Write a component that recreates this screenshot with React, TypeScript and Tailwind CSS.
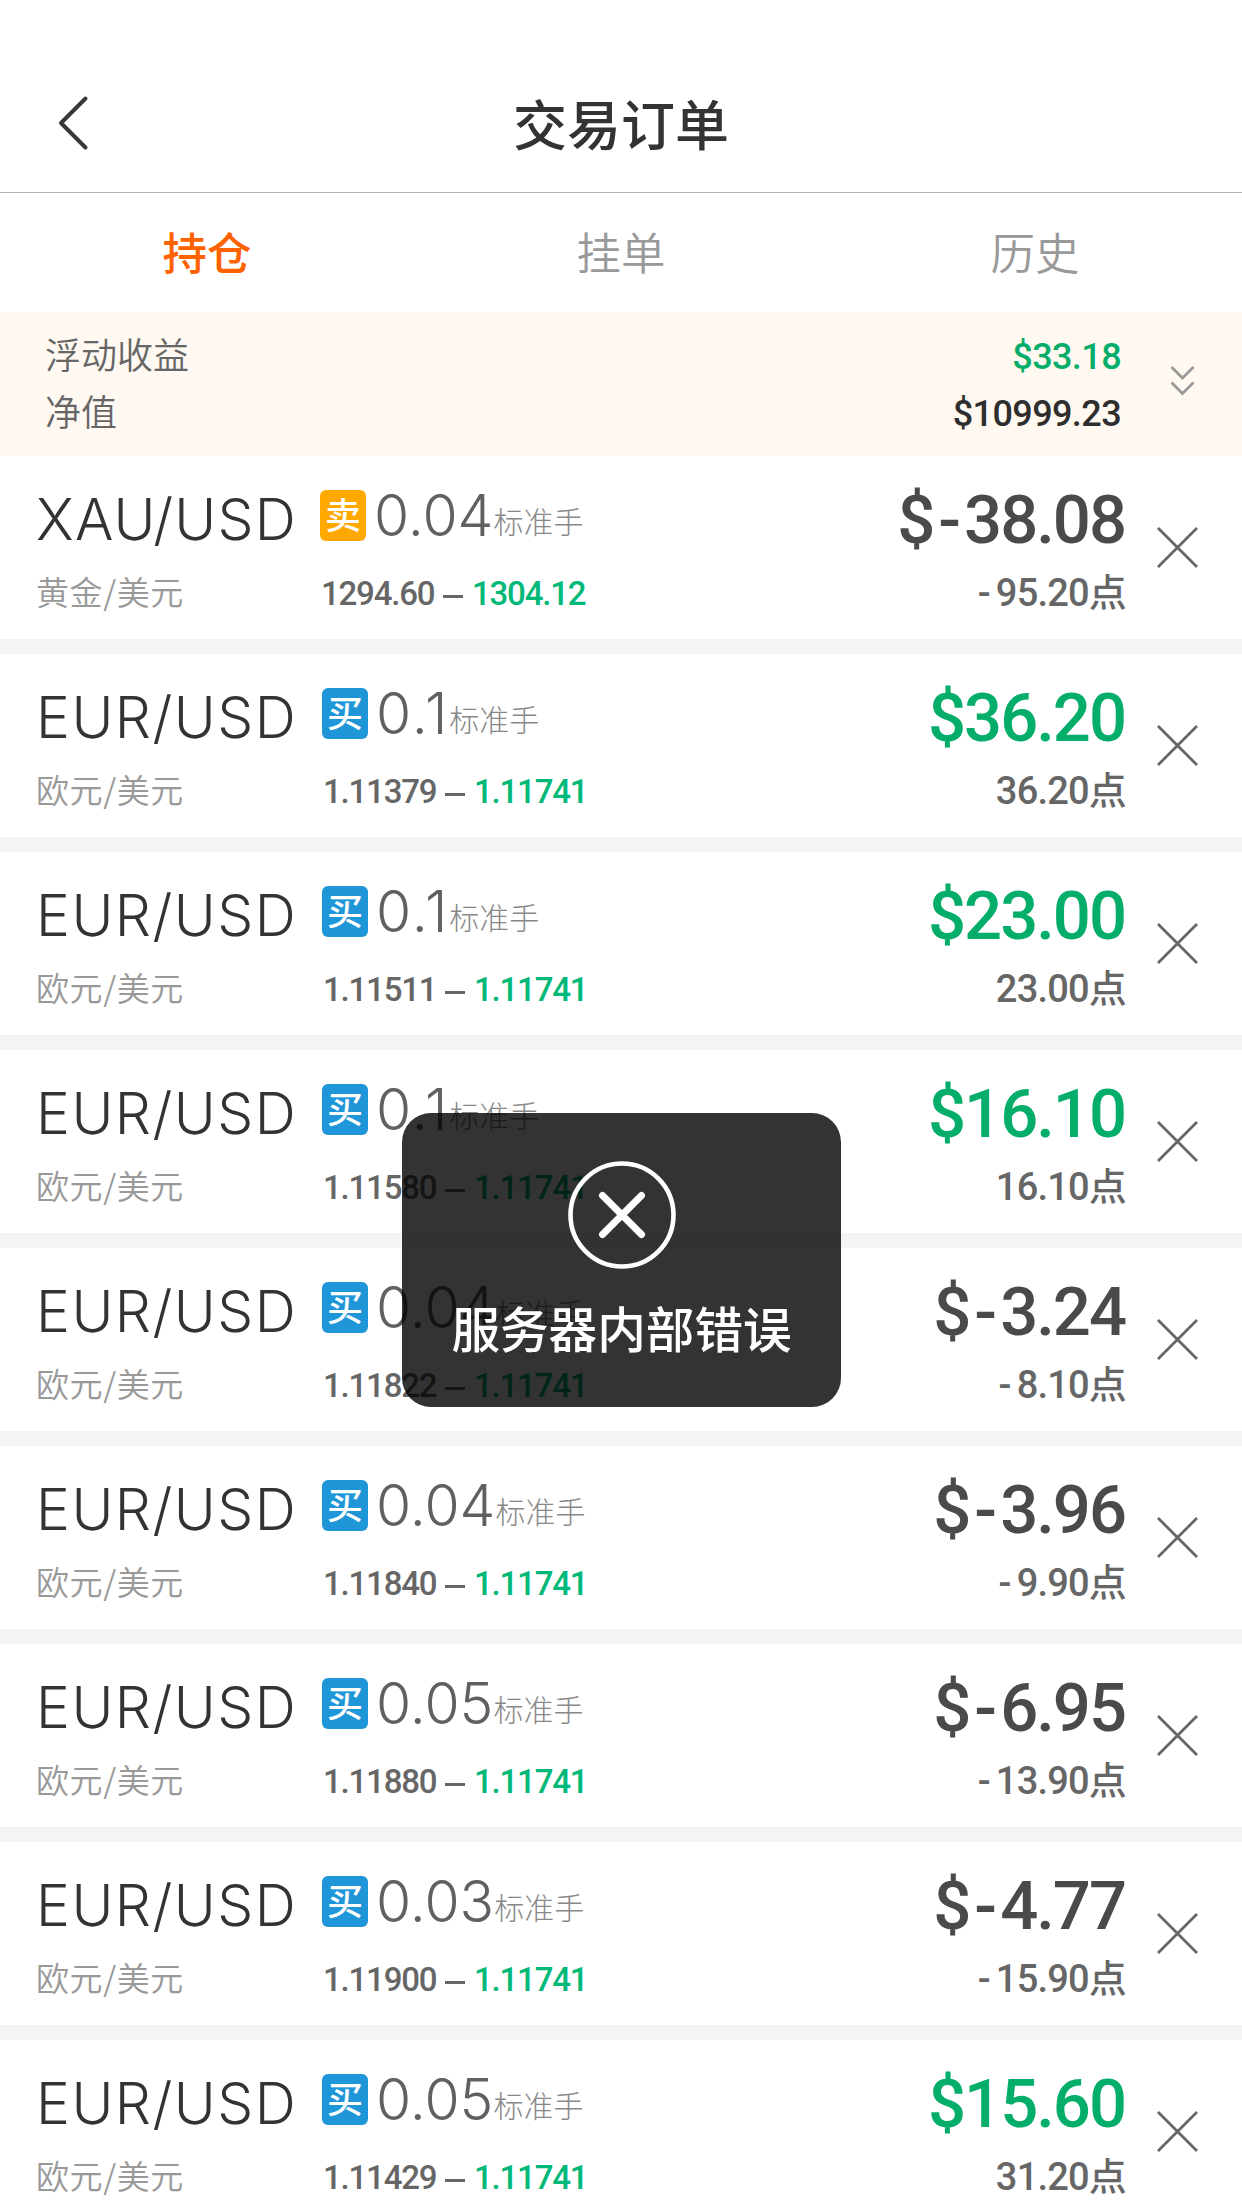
import React from 'react';

type Order = {
  pair: string;
  name: string;
  side: 'buy' | 'sell';
  lots: string;
  open: string;
  current: string;
  profit: string;
  points: string;
};

const eur = (lots: string, open: string, profit: string, points: string): Order => ({
  pair: 'EUR/USD',
  name: '欧元/美元',
  side: 'buy',
  lots,
  open,
  current: '1.11741',
  profit,
  points,
});

const orders: Order[] = [
  {
    pair: 'XAU/USD',
    name: '黄金/美元',
    side: 'sell',
    lots: '0.04',
    open: '1294.60',
    current: '1304.12',
    profit: '-38.08',
    points: '-95.20',
  },
  eur('0.1', '1.11379', '36.20', '36.20'),
  eur('0.1', '1.11511', '23.00', '23.00'),
  eur('0.1', '1.11580', '16.10', '16.10'),
  eur('0.04', '1.11822', '-3.24', '-8.10'),
  eur('0.04', '1.11840', '-3.96', '-9.90'),
  eur('0.05', '1.11880', '-6.95', '-13.90'),
  eur('0.03', '1.11900', '-4.77', '-15.90'),
  eur('0.05', '1.11429', '15.60', '31.20'),
];

const CJK = "font-['Noto_Sans_CJK_SC',sans-serif]";
const NUM = "font-['Roboto','Noto_Sans_CJK_SC',sans-serif]";
const THIN = "font-['Inter','Noto_Sans_CJK_SC',sans-serif]";

function Header() {
  return (
    <header className="flex h-[193px] items-center border-b border-[#b2b2b2] pt-[54px]">
      <div className="w-[200px] pl-[56px]">
        <svg width="34" height="56" viewBox="0 0 34 56" fill="none" stroke="#383838" strokeWidth="4" strokeLinecap="round" strokeLinejoin="round">
          <path d="M29.5 3.5 5 28 29.5 52.5" />
        </svg>
      </div>
      <h1 className={`${CJK} flex-1 text-center text-[54px] leading-[60px] font-medium text-[#333]`}>交易订单</h1>
      <div className="w-[200px]" />
    </header>
  );
}

function Tabs() {
  return (
    <nav className={`${CJK} grid h-[119px] grid-cols-3 items-center pb-[4px] text-center text-[44.5px] leading-[60px] text-[#999]`}>
      <span className="font-medium text-[#ff6200]">持仓</span>
      <span className="font-[350]">挂单</span>
      <span className="font-[350]">历史</span>
    </nav>
  );
}

function Summary() {
  return (
    <section className="flex h-[144px] bg-[#fff9f1] pl-[45px]">
      <div className={`${CJK} flex-1 pt-[13px] text-[36px] leading-[57px] font-[350] text-[#666]`}>
        <div>浮动收益</div>
        <div>净值</div>
      </div>
      <div className={`${NUM} pt-[17px] text-right text-[36px] leading-[57px] font-medium tracking-[-0.6px]`}>
        <div className="text-[#05ad6a]">$33.18</div>
        <div className="text-[#2e2e2e]">$10999.23</div>
      </div>
      <div className="w-[121px] pt-[51px] pl-[47px]">
        <svg width="30" height="36" viewBox="0 0 30 36" fill="none" stroke="#999" strokeWidth="2.8">
          <path d="M3.5 4 14.5 15 25.5 4M3.5 19.5 14.5 30.5 25.5 19.5" />
        </svg>
      </div>
    </section>
  );
}

function Row({ o }: { o: Order }) {
  const sell = o.side === 'sell';
  const gain = !o.profit.startsWith('-');
  const minus = o.points.startsWith('-');
  return (
    <li className="flex h-[198px] border-b-[15px] border-[#f4f4f4] bg-white pl-[36px]">
      <div className={sell ? 'w-[284px] pt-[34px]' : 'w-[286px] pt-[34px]'}>
        <div className={`${THIN} text-[57px] leading-[60px] font-light whitespace-nowrap text-[#333] ${sell ? 'tracking-[1.2px]' : 'tracking-[1.5px]'}`}>{o.pair}</div>
        <div className={`${CJK} mt-[21px] text-[33px] leading-[40px] font-[350] tracking-[0.6px] text-[#999]`}>{o.name}</div>
      </div>
      <div className="flex-1 pt-[30px]">
        <div className="flex h-[60px]">
          <span className={`${CJK} mt-[4px] h-[51px] w-[46px] rounded-[6px] text-center text-[36px] leading-[47px] font-medium text-white ${sell ? 'bg-[#ffa900]' : 'bg-[#1e96d7]'}`}>
            {sell ? '卖' : '买'}
          </span>
          <span className={`${THIN} ml-[8px] text-[57px] leading-[60px] font-light text-[#606060] ${o.lots.endsWith('1') ? 'tracking-[2px]' : ''}`}>{o.lots}</span>
          <span className={`${CJK} pt-[4px] text-[30px] leading-[60px] font-light text-[#888]`}>标准手</span>
        </div>
        <div className={`${NUM} mt-[28px] flex text-[33px] leading-[40px] font-medium tracking-[-1.2px]`}>
          <span className="w-[123px] pl-px text-[#666]">{o.open}</span>
          <span className="mt-[21px] h-[2.5px] w-[20px] bg-[#666]" />
          <span className="pl-[9px] text-[#00b878]">{o.current}</span>
        </div>
      </div>
      <div className={`${NUM} w-[300px] pt-[28px] text-right font-medium`}>
        <div className={`mr-px text-[67px] leading-[72px] tracking-[-2px] ${gain ? 'text-[#05ad6a]' : 'text-[#4a4a4a]'}`}>
          $
          {!gain && <span className="mx-[5px]">-</span>}
          {o.profit.replace('-', '')}
        </div>
        <div className="mt-[15px] text-[38px] leading-[44px] tracking-[-0.8px] text-[#666]">
          {minus && <span className="mr-[6px]">-</span>}
          {o.points.replace('-', '')}
          <span>点</span>
        </div>
      </div>
      <div className="flex w-[116px] items-center pl-[31px]">
        <svg width="41" height="41" viewBox="0 0 41 41" fill="none" stroke="#666" strokeWidth="2.8">
          <path d="M1 1 40 40M40 1 1 40" />
        </svg>
      </div>
    </li>
  );
}

function Toast() {
  return (
    <div className="absolute top-[1113px] left-[402px] flex h-[294px] w-[439px] flex-col items-center rounded-[29px] bg-black/80 pt-[47px]">
      <svg width="110" height="110" viewBox="0 0 110 110" fill="none" stroke="#fff" strokeLinecap="round">
        <circle cx="55" cy="55" r="51.5" strokeWidth="4.6" />
        <path d="M35.5 35.5 74.5 74.5M74.5 35.5 35.5 74.5" strokeWidth="7" />
      </svg>
      <p className={`${CJK} mt-[27px] text-[48.6px] leading-[60px] font-medium whitespace-nowrap text-white`}>服务器内部错误</p>
    </div>
  );
}

export default function App() {
  return (
    <div className="relative h-[2208px] w-[1242px] overflow-hidden bg-white">
      <Header />
      <Tabs />
      <Summary />
      <ul>
        {orders.map((o) => (
          <Row key={o.open} o={o} />
        ))}
      </ul>
      <Toast />
    </div>
  );
}
